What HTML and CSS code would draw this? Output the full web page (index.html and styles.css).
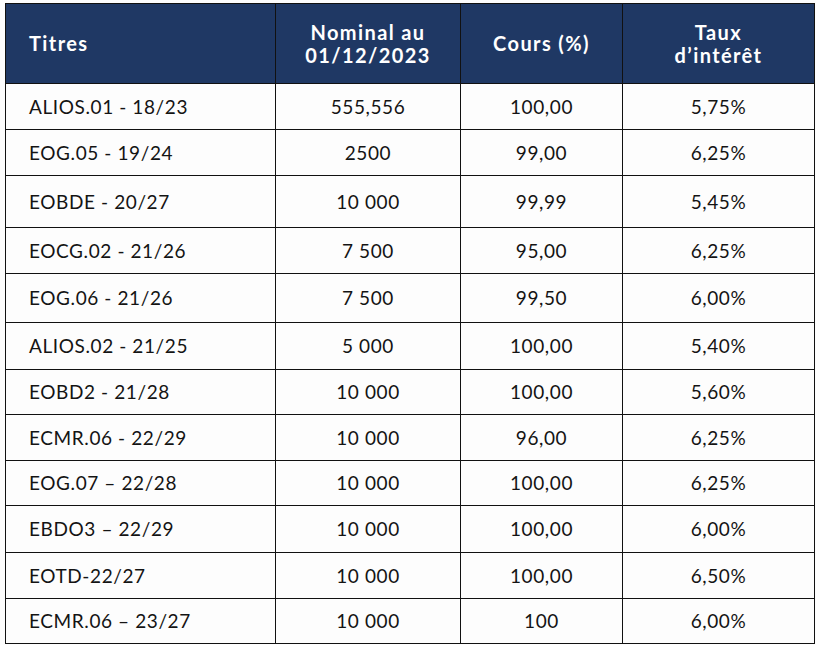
FILE: index.html
```html
<!DOCTYPE html>
<html lang="fr">
<head>
<meta charset="utf-8">
<title>Titres</title>
<link rel="stylesheet" href="styles.css">
</head>
<body>
<div class="page">
<table class="tbl">
  <colgroup>
    <col class="c1"><col class="c2"><col class="c3"><col class="c4">
  </colgroup>
  <thead>
    <tr>
      <th class="left">Titres</th>
      <th>Nominal au<br>01/12/2023</th>
      <th>Cours (%)</th>
      <th>Taux<br>d’intérêt</th>
    </tr>
  </thead>
  <tbody>
    <tr><td class="left">ALIOS.01 - 18/23</td><td>555,556</td><td>100,00</td><td>5,75%</td></tr>
    <tr><td class="left">EOG.05 - 19/24</td><td>2500</td><td>99,00</td><td>6,25%</td></tr>
    <tr><td class="left">EOBDE - 20/27</td><td>10 000</td><td>99,99</td><td>5,45%</td></tr>
    <tr><td class="left">EOCG.02 - 21/26</td><td>7 500</td><td>95,00</td><td>6,25%</td></tr>
    <tr><td class="left">EOG.06 - 21/26</td><td>7 500</td><td>99,50</td><td>6,00%</td></tr>
    <tr><td class="left">ALIOS.02 - 21/25</td><td>5 000</td><td>100,00</td><td>5,40%</td></tr>
    <tr><td class="left">EOBD2 - 21/28</td><td>10 000</td><td>100,00</td><td>5,60%</td></tr>
    <tr><td class="left">ECMR.06 - 22/29</td><td>10 000</td><td>96,00</td><td>6,25%</td></tr>
    <tr><td class="left">EOG.07 – 22/28</td><td>10 000</td><td>100,00</td><td>6,25%</td></tr>
    <tr><td class="left">EBDO3 – 22/29</td><td>10 000</td><td>100,00</td><td>6,00%</td></tr>
    <tr><td class="left">EOTD-22/27</td><td>10 000</td><td>100,00</td><td>6,50%</td></tr>
    <tr><td class="left">ECMR.06 – 23/27</td><td>10 000</td><td>100</td><td>6,00%</td></tr>
  </tbody>
</table>
</div>
</body>
</html>
```
FILE: styles.css
```css
html, body {
  margin: 0;
  padding: 0;
  background: #fdfdfd;
}
.page {
  padding: 3px 0 0 5px;
}
.tbl {
  border-collapse: collapse;
  table-layout: fixed;
  width: 809px;
  font-family: Lato, "Liberation Sans", sans-serif;
  color: #141414;
}
.c1 { width: 270px; }
.c2 { width: 185px; }
.c3 { width: 162px; }
.c4 { width: 192px; }
.tbl th, .tbl td {
  border: 1.5px solid #111;
  text-align: center;
  vertical-align: middle;
  padding: 0;
}
.tbl th {
  background: #1f3864;
  color: #fff;
  font-weight: 700;
  font-size: 20px;
  line-height: 23px;
  height: 79px;
  letter-spacing: 1.4px;
}
.tbl td {
  font-size: 19px;
  line-height: 22px;
  height: 45px;
  letter-spacing: 0.6px;
}
.tbl .left {
  text-align: left;
  padding-left: 23px;
}
.tbl tbody tr:nth-child(3) td { height: 51px; }
.tbl tbody tr:nth-child(5) td { height: 48px; }
.tbl tbody tr:nth-child(6) td { height: 46px; }
.tbl tbody tr:nth-child(7) td { height: 44px; }
.tbl tbody tr:nth-child(9) td { height: 44px; }
.tbl tbody tr:nth-child(10) td { height: 46px; }
.tbl tbody tr:nth-child(12) td { height: 44px; }
```
